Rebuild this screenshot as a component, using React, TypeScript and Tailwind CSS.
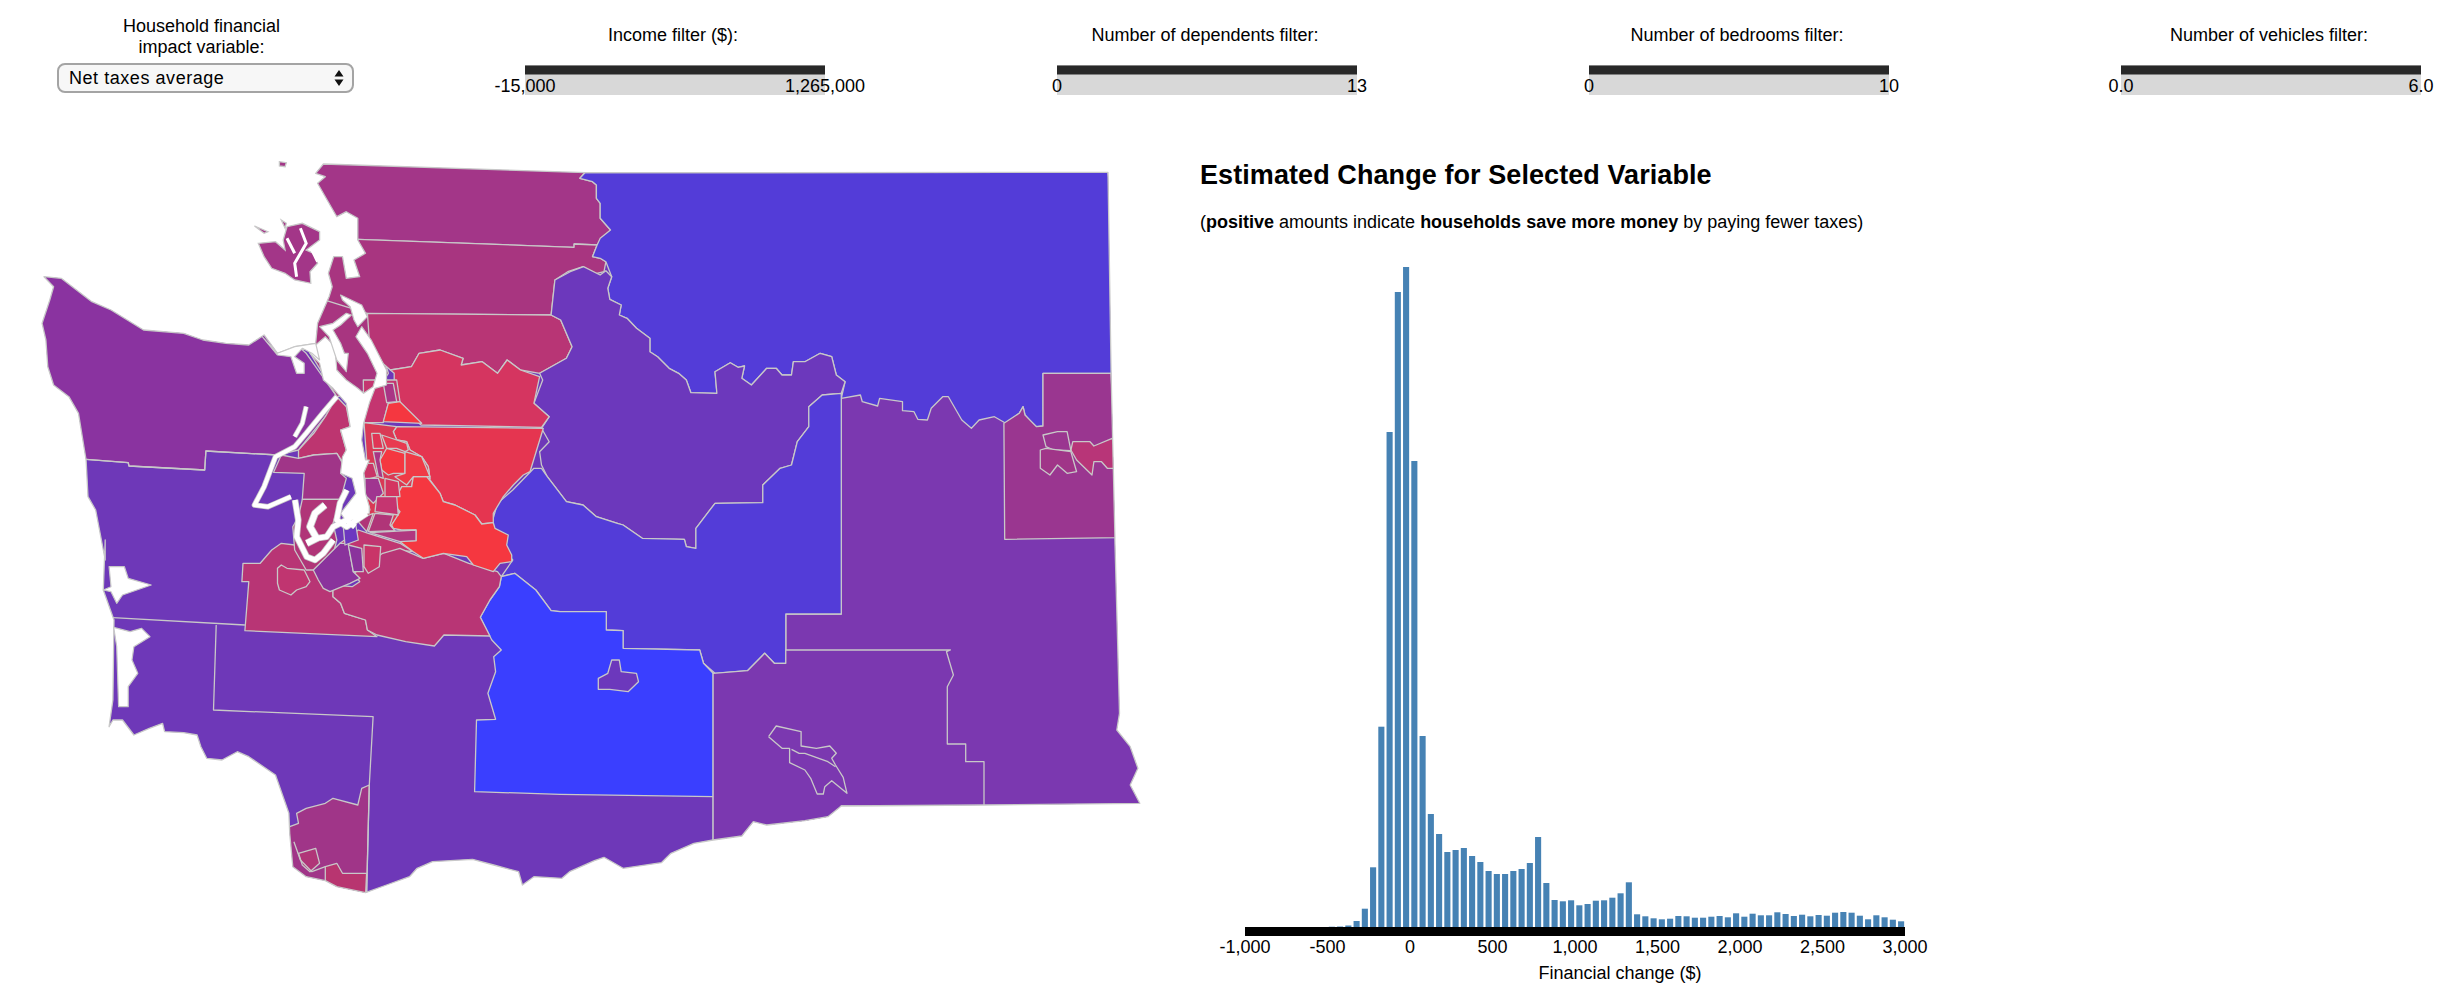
// Household tax impact dashboard: filters, county map and histogram

const FONT = "font-['Liberation_Sans',Arial,sans-serif]";

// map shapes were traced from four overlapping views, each with its own origin and scale
const VIEWS: Record<string, [number, number, number, number]> = {
  A: [0, 140, 2.613, 3],
  B: [0, 540, 2.613, 3],
  C: [560, 140, 2.613, 3],
  D: [560, 540, 2.613, 3],
  E: [290, 380, 3, 3],
};

function pts(s: string) {
  let view = VIEWS.A;
  const out: string[] = [];
  for (const tok of s.trim().split(/\s+/)) {
    if (VIEWS[tok]) {
      view = VIEWS[tok];
      continue;
    }
    const [x, y] = tok.split(",").map(Number);
    out.push(`${(view[0] + x / view[2]).toFixed(1)},${(view[1] + y / view[3]).toFixed(1)}`);
  }
  return out.join(" ");
}

const STATE = pts(`A 845,72 1530,98 C 65,98 1432,97 1440,700 1450,1190 D 1450,0 1462,520 1455,570 1490,620 1510,685 1490,735 1515,790
  1108,795 735,798 700,830 640,842 540,855 505,845 475,888 400,900 350,910 290,940 265,968 165,985 115,952 90,962 25,995 5,1015
  B 1395,1010 1365,1035 1355,995 1290,975 1235,958 1130,965 1090,985 1070,1010 1010,1035 955,1058 880,1040 850,1022 800,1010 765,980
  757,880 755,820 720,705 650,650 620,635 580,660 540,655 525,620 515,585 480,578 430,575 425,550 390,565 350,585 320,540 295,540 285,560
  295,480 298,240 270,150 275,0 A 275,1260 250,1110 230,1070 225,960 205,820 180,770 140,735 125,680 120,600 110,550 130,480 140,440
  115,410 160,415 240,485 290,510 340,545 375,570 480,580 530,600 590,610 650,615 690,585 725,640 770,620 825,610 830,550 860,470 868,440
  858,400 872,350 895,350 905,415 940,410 925,360 955,340 935,300 935,235 905,215 880,230 850,170 830,130 850,110 825,100`);

const NORTH_EDGE = "C 65,98 52,115 85,125 95,135 95,175 105,190 105,235 132,270 110,300 97,315";
const OKANOGAN_SOUTH = `C 1262,858 1245,860 1230,845 1215,825 1210,800 1200,820 1165,850 1135,830 1095,840 1075,865 1050,840 1015,770 1000,770
  970,805 960,840 935,838 925,815 895,812 895,785 835,775 830,798 790,785 785,765 735,775 745,725 722,705 710,650 680,640 640,665
  610,665 605,705 580,705 565,685 540,685 500,735 475,715 482,678 465,682 445,668 405,695 410,760 342,758 330,720 310,700 285,685
  255,650 235,635 235,595 200,565 175,535 155,525 160,495 130,478 125,445 135,410 120,365 105,355 85,350 97,315`;

// painted back to front, then clipped to the state outline
const COUNTIES: { fill: string; d: string }[] = [
  { fill: "#7b38b0", d: "C 735,760 1500,600 D 1600,820 1108,900 400,950 400,400 490,392 535,340 560,370 590,370 590,222 735,222 735,0" },
  { fill: "#8a33a0", d: "A 60,380 720,560 800,640 880,770 850,830 780,930 725,945 538,933 535,990 337,978 335,968 225,958 60,958" },
  { fill: "#a83580", d: "A 790,430 960,500 1015,700 985,750 880,770 800,620" },
  { fill: "#a33688", d: `A 800,40 1530,98 ${NORTH_EDGE} A 1500,312 1500,322 935,298 860,298` },
  { fill: "#a83580", d: "A 820,298 935,298 1500,322 1500,312 C 97,315 85,350 105,355 120,365 115,395 80,405 60,380 20,395 A 1450,420 1440,525 960,520 820,470" },
  { fill: "#b83575", d: "A 960,520 1440,525 1465,540 1495,620 1480,655 1410,700 1360,690 1325,660 1300,700 1260,665 1205,675 1210,655 1150,630 1095,640 1075,680 1020,690 1000,670 965,600" },
  { fill: "#533cd8", d: `C 65,98 1432,97 1500,700 1262,700 ${OKANOGAN_SOUTH} 105,295 132,270 105,235 105,190 95,175 95,135 85,125 52,115` },
  { fill: "#6c38bc", d: `A 1440,525 1450,420 1490,395 1525,380 1568,405 C 120,392 135,410 125,445 130,478 160,495 155,525 175,535 200,565
      235,595 235,635 255,650 285,685 310,700 330,720 342,758 410,760 405,695 445,668 465,682 482,678 475,715 500,735 540,685 565,685 580,705 605,705 610,665
      640,665 680,640 710,650 722,705 745,725 735,760 685,765 650,800 650,860 620,905 605,975 575,985 530,1035 530,1088 405,1090 355,1165 355,1225 330,1220 325,1198
      215,1195 165,1155 150,1150 95,1130 60,1095 A 1480,1085 1430,1010 1415,975 1410,935 1435,905 1415,865 1435,830 1395,790 1418,720 1410,700 1480,655 1495,620 1465,540` },
  { fill: "#533cd8", d: `A 1415,985 1430,1010 1480,1085 C 60,1095 95,1130 150,1150 165,1155 215,1195 325,1198 330,1220 355,1225 355,1165 405,1090 530,1088 530,1035 575,985 605,975
      620,905 650,860 650,800 685,765 735,760 D 735,0 735,222 590,222 590,370 560,370 535,340 490,392 405,400 375,370 365,330 165,325 165,272 121,270 121,215 0,215 B 1440,212 1400,150 1345,100 1310,110 1340,60 1290,0 A 1285,1150 1300,1090 1340,1050 1395,985` },
  { fill: "#3a3fff", d: "B 1310,110 1345,100 1400,150 1440,212 D 0,215 121,215 121,270 165,272 165,325 365,330 375,370 400,400 400,770 0,763 B 1240,755 1245,540 1295,538 1275,460 1295,395 1290,350 1310,330 1285,300 1255,232 1280,180 1305,140" },
  { fill: "#6c38bc", d: "D 100,415 125,400 135,360 155,360 160,395 200,400 205,425 178,455 130,448 100,448" },
  { fill: "#7b38b0", d: "D 400,400 490,392 535,340 560,370 590,370 590,330 1020,330 1010,335 1028,405 1012,440 1012,612 1060,612 1060,665 1108,665 1108,800 735,798 700,850 400,910" },
  { fill: "#9a3690", d: "C 1160,850 1200,820 1210,800 1215,825 1245,860 1262,858 1262,700 1440,700 1460,1193 1162,1198" },
  { fill: "#b83578", d: "C 1335,930 1340,905 1385,905 1395,918 1443,895 1460,985 1430,985 1415,965 1395,965 1390,1005 1350,960" },
  { fill: "#9a3690", d: "C 1262,885 1300,875 1325,875 1335,932 1290,930 1270,920" },
  { fill: "#a03588", d: "C 1255,930 1270,925 1335,935 1350,995 1325,1000 1300,975 1280,1005 1255,985" },
  { fill: "#d53560", d: "A 1020,690 1075,680 1095,640 1150,630 1210,655 1205,675 1260,665 1300,700 1325,660 1360,690 1410,710 1395,790 1435,830 1415,862 1100,855 1065,820 1040,785 1030,770 1030,700" },
  { fill: "#c43570", d: "E 220,0 320,0 330,65 295,70 280,128 222,128" },
  { fill: "#f53740", d: "E 280,125 295,70 330,65 395,130" },
  { fill: "#a93585", d: "E 280,10 310,10 320,65 290,68" },
  { fill: "#e53550", d: "E 320,140 760,145 720,275 700,285 670,315 640,350 610,400 610,428 575,432 555,405 495,375 460,365 450,340 420,300 415,260 395,230 360,210 350,185 320,180 310,155" },
  { fill: "#d93a55", d: "E 222,128 320,140 310,155 320,180 350,185 360,210 395,230 415,260 420,295 370,290 365,320 335,320 310,370 330,400 305,435 240,455 200,420 240,390 225,340 230,240" },
  { fill: "#bd3570", d: "A 880,770 905,800 915,860 890,870 905,930 895,965 880,940 820,945 780,955 780,930 820,880 850,830" },
  { fill: "#a03588", d: "A 735,945 780,955 820,945 880,940 895,970 890,1000 905,1015 890,1078 790,1078 795,1000 715,997" },
  { fill: "#b83575", d: "B 635,70 680,70 710,30 735,10 770,15 790,50 850,90 870,135 870,170 890,190 900,220 955,240 960,270 985,290 640,272 650,125 632,125" },
  { fill: "#b03578", d: "A 790,1078 890,1078 870,1150 880,1200 860,1290 800,1290 770,1230 765,1160 780,1130" },
  { fill: "#c03570", d: "E 205,450 235,460 330,490 370,515 320,510 270,545 240,575 210,590 200,600 170,600 150,490" },
  { fill: "#b83575", d: "B 1045,25 1105,55 1160,40 1225,70 1300,95 1310,110 1305,140 1280,180 1255,232 1280,288 1160,285 1135,318 1060,305 985,285 960,270 955,240 900,220 890,190 870,170 870,135 920,140 940,125 925,100 1000,40" },
  { fill: "#c03570", d: "B 725,85 735,75 750,85 795,90 810,125 800,140 775,150 760,165 730,150 725,130" },
  { fill: "#8a339c", d: "E 70,570 105,535 150,490 175,490 190,575 210,595 180,610 120,635 100,625 85,600" },
  { fill: "#8a339c", d: "E 175,495 215,505 220,575 190,575" },
  { fill: "#c93568", d: "E 222,495 272,500 268,560 235,580 222,560" },
  { fill: "#6c38c0", d: "E 160,440 195,420 205,480 165,495" },
  { fill: "#f53740", d: "E 305,435 330,395 310,370 335,320 365,320 370,290 410,290 450,340 460,365 495,375 555,405 575,432 610,428 615,445 655,465 650,495 665,525 665,545 630,550 610,575 550,555 530,530 460,520 400,535 370,515 330,485 378,482 378,450 335,450 310,445" },
  { fill: "#e03555", d: "E 245,160 270,160 280,205 250,205" },
  { fill: "#e83a50", d: "E 275,165 320,180 350,190 355,210 345,215 320,205 290,205" },
  { fill: "#f53740", d: "E 270,240 290,205 345,220 345,280 310,280 295,285 275,270" },
  { fill: "#f03a45", d: "E 345,215 395,230 420,290 370,290 350,315 315,290 345,280" },
  { fill: "#a93585", d: "E 250,215 275,215 270,240 280,295 265,290" },
  { fill: "#c93568", d: "E 215,250 250,250 262,290 225,300" },
  { fill: "#a03590", d: "E 225,295 265,295 280,340 250,370 225,345" },
  { fill: "#d43560", d: "E 285,295 325,305 330,350 285,350" },
  { fill: "#c53570", d: "E 260,350 320,350 325,405 255,395" },
  { fill: "#b03578", d: "E 255,400 310,405 300,435 315,452 235,455" },
  { fill: "#b03578", d: "E 200,420 230,455 250,400" },
  { fill: "#b03880", d: "E 240,458 378,450 378,482 330,485" },
  { fill: "#a03588", d: "B 965,735 945,745 935,795 870,775 850,790 800,805 775,820 780,850 757,860 740,900 765,1040 958,1070" },
  { fill: "#b83570", d: "B 850,980 880,970 895,1000 958,1000 955,1070 850,1040" },
  { fill: "#b03578", d: "B 780,940 825,925 835,970 810,995 790,975" },
];

// county lines that have the same fill on both sides
const LINES = [
  "A 225,958 335,968 337,978 535,990 538,933 725,945",
  "B 295,233 640,255",
  "B 565,255 558,510 975,530 965,735 958,1055",
  "B 768,905 785,960 815,995 850,980",
  "D 545,590 565,558 630,575 630,618 670,625 705,618 722,640 710,655 720,675 740,712 750,760 710,722 692,740 688,762 672,762 655,715 640,690 600,668 600,625 580,625 555,600 545,590",
  "D 605,628 625,640 640,640 700,665 720,680",
];

const WATER = [
  "A 810,640 825,615 850,590 875,620 880,690 905,720 935,745 950,760 975,740 985,700 960,640 930,590 945,560 970,600 1010,690 1010,735 980,745 965,790 950,850 945,900 955,960 965,960 950,1000 955,1060 965,1100 965,1120 925,1140 905,1145 890,1120 910,1090 930,1060 920,1015 890,1000 895,950 905,930 890,870 915,860 905,790 870,745 845,720 835,670",
  "A 835,560 870,550 905,520 918,525 890,555 870,570 890,610 900,640 910,640 905,695 880,660 860,590",
  "A 890,465 945,495 960,530 935,560 925,540 915,500 895,480",
  "A 685,590 725,640 770,620 825,610 835,660 815,640 790,625 770,650 795,670 795,700 775,700 760,650 725,645",
  "B 285,80 325,80 335,115 395,135 320,165 305,190 290,155 270,150 290,140",
  "B 297,262 340,275 370,265 392,290 350,320 345,360 360,400 335,440 335,500 310,500 305,320",
];

const CHANNELS: { d: string; w: number }[] = [
  { d: "A 880,770 850,810 800,880 770,920 720,950 690,1040 665,1095 700,1100 760,1070", w: 4 },
  { d: "A 800,800 790,850 770,890", w: 3.5 },
  { d: "E 15,360 25,420 20,470 50,530 75,540 100,520 130,480", w: 5 },
  { d: "E 105,375 75,400 60,440 80,475 50,490", w: 6 },
  { d: "E 80,475 110,470 130,440 170,420 195,440", w: 5 },
  { d: "E 170,330 150,370 140,420 170,440 230,400", w: 5 },
];

const ISLANDS = [
  "A 675,310 720,305 745,330 740,300 750,260 790,250 835,275 835,300 800,330 820,340 830,370 810,395 812,430 770,420 745,400 710,385 690,350",
  "A 665,258 700,275 690,280",
  "A 735,240 748,250 745,265",
  "A 730,65 748,68 745,80 730,78",
];
const ISLAND_CUTS = ["A 785,265 800,310 770,370 775,410", "A 750,295 770,340", "A 815,330 830,365", "A 855,235 890,295"];

// bar heights in px, 50 dollar bins starting at -1000
const BINS = [
  0, 0, 0, 0, 0, 0, 0, 0, 0, 0, 0.3, 0.5, 1.5, 6, 18.3, 59.7, 200.3, 495, 635, 660, 466, 191, 113, 93, 75, 77, 79, 71, 65, 56, 53,
  53, 56, 58, 64, 90, 44, 27, 25.7, 26.7, 21.7, 23, 26.3, 26.7, 29.3, 33.7, 44.7, 12.7, 10.7, 8.7, 7.7, 8.3, 11, 10.7, 9.3, 9.3,
  10.3, 11, 9.7, 13.7, 10.3, 13.3, 11.7, 11.7, 14.7, 13, 11, 12.3, 10.7, 12, 11.3, 14.3, 15, 14.3, 11.3, 7.7, 11.7, 9.7, 7.3, 5.7,
];
const TICKS = ["-1,000", "-500", "0", "500", "1,000", "1,500", "2,000", "2,500", "3,000"];

function RangeFilter({ label, min, max }: { label: string; min: string; max: string }) {
  return (
    <div className="w-[300px] shrink-0">
      <div className="h-[65px] pr-[4px] pt-[25px] text-center text-[18px] leading-[21px] text-black">{label}</div>
      <div className="relative h-[30px] bg-[#d8d8d8] text-[18px] leading-[21px] text-black">
        <div className="h-[10px] border-y border-[#808080] bg-[#282828]" />
        <span className="absolute left-0 top-[11px] -translate-x-1/2">{min}</span>
        <span className="absolute right-0 top-[11px] translate-x-1/2">{max}</span>
      </div>
    </div>
  );
}

function VariableSelect() {
  return (
    <div className="w-[297px] shrink-0 pt-[16px] ml-[57px] mr-[171px]">
      <div className="pr-[8px] text-center text-[18px] leading-[21px] text-black">
        Household financial
        <br />
        impact variable:
      </div>
      <div className="relative mt-[5px] h-[30px] rounded-[8px] border-2 border-[#a4a4a4] bg-[#f7f7f7]">
        <div className="pl-[10px] text-[18px] leading-[26px] tracking-[0.55px] text-black">Net taxes average</div>
        <svg className="absolute right-[8px] top-[5px]" width="10" height="16" viewBox="0 0 10 16">
          <path d="M5 0 L9.5 6.5 H0.5 Z M5 16 L0.5 9.5 H9.5 Z" fill="#111" />
        </svg>
      </div>
    </div>
  );
}

function WashingtonMap() {
  return (
    <svg className="block" width="1200" height="870" viewBox="0 126 1200 870">
      <defs>
        <clipPath id="state">
          <polygon points={STATE} />
        </clipPath>
      </defs>
      <polygon points={STATE} fill="#6e38b8" />
      <g clipPath="url(#state)" stroke="#c8c8c8" strokeWidth="1.3" strokeLinejoin="round">
        {COUNTIES.map((c, i) => (
          <polygon key={i} points={pts(c.d)} fill={c.fill} />
        ))}
        {LINES.map((d, i) => (
          <polyline key={i} points={pts(d)} fill="none" />
        ))}
      </g>
      <polygon points={STATE} fill="none" stroke="#c8c8c8" strokeWidth="1.3" strokeLinejoin="round" />
      {ISLANDS.map((d, i) => (
        <polygon key={i} points={pts(d)} fill="#a33688" stroke="#c8c8c8" strokeWidth="1.3" />
      ))}
      {ISLAND_CUTS.map((d, i) => (
        <polyline key={i} points={pts(d)} fill="none" stroke="#fff" strokeWidth="3" />
      ))}
      {CHANNELS.map((c, i) => (
        <polyline key={i} points={pts(c.d)} fill="none" stroke="#c8c8c8" strokeWidth={c.w + 1.6} strokeLinejoin="round" />
      ))}
      {WATER.map((d, i) => (
        <polygon key={i} points={pts(d)} fill="#fff" stroke="#c8c8c8" strokeWidth="1.2" strokeLinejoin="round" />
      ))}
      {CHANNELS.map((c, i) => (
        <polyline key={i} points={pts(c.d)} fill="none" stroke="#fff" strokeWidth={c.w} strokeLinejoin="round" />
      ))}
    </svg>
  );
}

function Histogram() {
  return (
    <svg className="block" width="730" height="746" viewBox="1200 250 730 746">
      {BINS.map((h, i) => (
        <rect key={i} x={1245 + i * 8.25 + 1.3} y={927 - h} width="6.1" height={h} fill="#4682b4" />
      ))}
      <rect x="1245" y="927" width="660" height="9" fill="#000" />
      {TICKS.map((t, i) => (
        <text key={t} x={1245 + i * 82.5} y="953" textAnchor="middle" fontSize="18" fill="#000">
          {t}
        </text>
      ))}
      <text x="1620" y="979" textAnchor="middle" fontSize="18" fill="#000">
        Financial change ($)
      </text>
    </svg>
  );
}

export default function App() {
  return (
    <div className={`h-[996px] w-[2446px] overflow-hidden bg-white ${FONT}`}>
      <div className="flex h-[126px]">
        <VariableSelect />
        <div className="flex gap-[232px]">
          <RangeFilter label="Income filter ($):" min="-15,000" max="1,265,000" />
          <RangeFilter label="Number of dependents filter:" min="0" max="13" />
          <RangeFilter label="Number of bedrooms filter:" min="0" max="10" />
          <RangeFilter label="Number of vehicles filter:" min="0.0" max="6.0" />
        </div>
      </div>
      <div className="flex">
        <WashingtonMap />
        <div>
          <h1 className="mt-[32px] text-[27px] font-bold leading-[34px] tracking-[0.08px] text-black">Estimated Change for Selected Variable</h1>
          <p className="mt-[20px] h-[38px] text-[18px] leading-[21px] text-black">
            (<b>positive</b> amounts indicate <b>households save more money</b> by paying fewer taxes)
          </p>
          <Histogram />
        </div>
      </div>
    </div>
  );
}
